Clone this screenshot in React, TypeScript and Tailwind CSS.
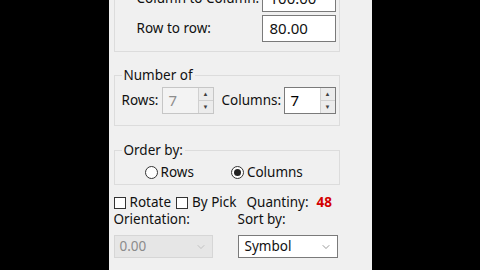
import { ChevronDown } from 'lucide-react';

interface SpinnerProps {
  value: string;
  disabled?: boolean;
  width: string;
}

function Spinner({ value, disabled, width }: SpinnerProps) {
  return (
    <div
      className={`flex h-[27px] ${width} border ${
        disabled ? 'border-[#c6c6c6] bg-[#f3f3f3]' : 'border-[#7a7a7a] bg-white'
      }`}
    >
      <span
        className={`flex-1 pl-[6px] text-[15px] leading-[25px] ${
          disabled ? 'text-[#8d8d8d]' : 'text-black'
        }`}
      >
        {value}
      </span>
      <div className="flex w-[15px] flex-col border-l border-[#d0d0d0] bg-[#ececec]">
        <span className="flex flex-1 items-center justify-center border-b border-[#d0d0d0] text-[6px] leading-none text-[#404040]">
          ▲
        </span>
        <span className="flex flex-1 items-center justify-center text-[6px] leading-none text-[#404040]">
          ▼
        </span>
      </div>
    </div>
  );
}

function Radio({ label, checked }: { label: string; checked?: boolean }) {
  return (
    <label className="flex items-center gap-[3px]">
      <span className="flex h-[13px] w-[13px] items-center justify-center rounded-full border border-[#333] bg-white">
        {checked && <span className="h-[7px] w-[7px] rounded-full bg-[#222]" />}
      </span>
      <span>{label}</span>
    </label>
  );
}

function Check({ label }: { label: string }) {
  return (
    <label className="flex items-center gap-[4px]">
      <span className="h-[12px] w-[12px] border border-[#333] bg-white" />
      <span>{label}</span>
    </label>
  );
}

export default function App() {
  return (
    <div
      className="flex h-[270px] w-[480px] justify-center overflow-hidden bg-black text-[13.5px] text-[#111]"
      style={{ fontFamily: '"Noto Sans", "Open Sans", sans-serif' }}
    >
      <div className="flex w-[263px] shrink-0 flex-col bg-[#f0f0f0] pl-[5px]">
        {/* spacing group, top cut off by the window */}
        <div className="-mt-[15px] flex w-[226px] shrink-0 flex-col gap-[3px] border border-t-0 border-[#dcdcdc] pb-[9px] pr-[3px]">
          <div className="flex items-center justify-between pl-[22px]">
            <span>Column to Column:</span>
            <div className="h-[27px] w-[74px] border border-[#7a7a7a] bg-white pl-[7px] text-[15px] leading-[25px]">
              100.00
            </div>
          </div>
          <div className="flex items-center justify-between pl-[22px]">
            <span>Row to row:</span>
            <div className="h-[27px] w-[74px] border border-[#7a7a7a] bg-white pl-[7px] text-[15px] leading-[25px]">
              80.00
            </div>
          </div>
        </div>

        <fieldset className="mt-[14px] h-[60px] w-[226px] shrink-0 border border-[#dcdcdc]">
          <legend className="ml-[7px] px-[2px] leading-[18px]">Number of</legend>
          <div className="mt-[3px] flex items-center pl-[7px]">
            <span className="w-[40px]">Rows:</span>
            <Spinner value="7" disabled width="w-[52px]" />
            <span className="ml-[8px] w-[62px]">Columns:</span>
            <Spinner value="7" width="w-[52px]" />
          </div>
        </fieldset>

        <fieldset className="mt-[15px] h-[44px] w-[226px] shrink-0 border border-[#dcdcdc]">
          <legend className="ml-[7px] px-[2px] leading-[18px]">Order by:</legend>
          <div className="mt-[3px] flex items-center gap-[37px] pl-[30px]">
            <Radio label="Rows" />
            <Radio label="Columns" checked />
          </div>
        </fieldset>

        <div className="mt-[9px] flex h-[17px] shrink-0 items-center">
          <Check label="Rotate" />
          <div className="ml-[5px]">
            <Check label="By Pick" />
          </div>
          <span className="ml-[10px]">Quantiny:</span>
          <span className="ml-[8px] font-bold text-[#d40000]">48</span>
        </div>

        <div className="flex h-[17px] shrink-0 items-center">
          <span className="w-[124px]">Orientation:</span>
          <span>Sort by:</span>
        </div>

        <div className="mt-[7px] flex shrink-0 items-center">
          <div className="flex h-[23px] w-[99px] items-center justify-between border border-[#d6d6d6] bg-[#e6e6e6] pl-[5px] pr-[5px] text-[#8b8b8b]">
            <span>0.00</span>
            <ChevronDown size={12} strokeWidth={1.2} className="text-[#a8a8a8]" />
          </div>
          <div className="ml-[25px] flex h-[23px] w-[100px] items-center justify-between border border-[#7a7a7a] bg-white pl-[6px] pr-[5px]">
            <span>Symbol</span>
            <ChevronDown size={12} strokeWidth={1.2} className="text-[#555]" />
          </div>
        </div>
      </div>
    </div>
  );
}
